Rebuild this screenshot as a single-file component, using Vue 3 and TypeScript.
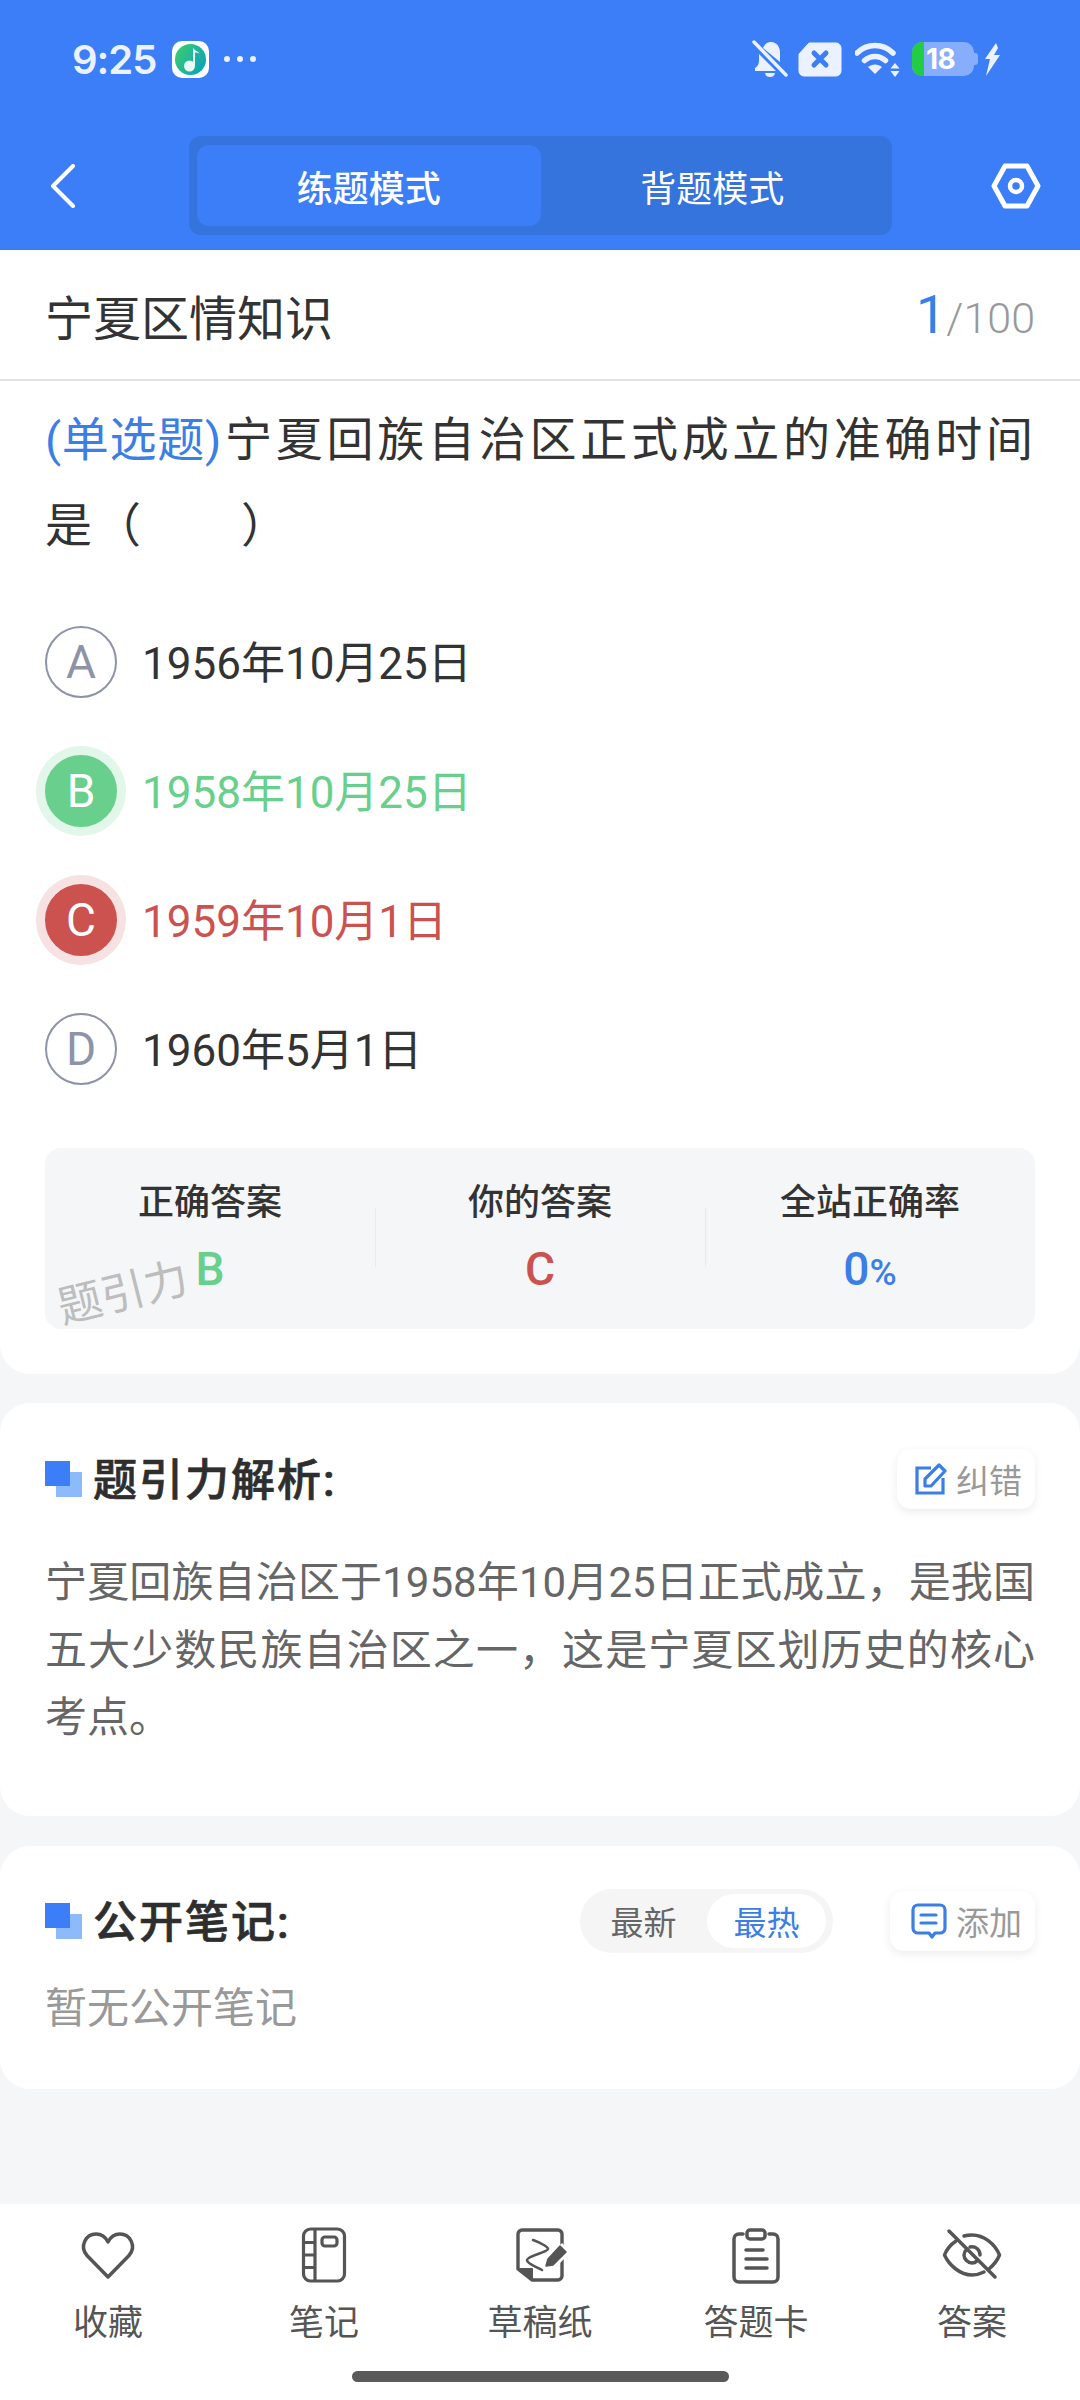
<script setup lang="ts">
interface Option {
  key: string
  text: string
  state: '' | 'right' | 'wrong'
}

interface Stat {
  label: string
  value: string
  unit?: string
  tone: string
}

const options: Option[] = [
  { key: 'A', text: '1956年10月25日', state: '' },
  { key: 'B', text: '1958年10月25日', state: 'right' },
  { key: 'C', text: '1959年10月1日', state: 'wrong' },
  { key: 'D', text: '1960年5月1日', state: '' }
]

const stats: Stat[] = [
  { label: '正确答案', value: 'B', tone: 'right' },
  { label: '你的答案', value: 'C', tone: 'wrong' },
  { label: '全站正确率', value: '0', unit: '%', tone: 'blue' }
]
</script>

<template>
  <div class="page">
    <header class="top">
      <div class="status">
        <div class="status-left">
          <span class="time">9:25</span>
          <span class="app-icon">
            <svg width="37" height="37" viewBox="0 0 37 37">
              <defs>
                <linearGradient id="musicGrad" x1="0" y1="0" x2="1" y2="0.6">
                  <stop offset="0" stop-color="#3fd06a" />
                  <stop offset="1" stop-color="#0ea5b5" />
                </linearGradient>
              </defs>
              <circle cx="18.5" cy="18.5" r="15.5" fill="url(#musicGrad)" />
              <circle cx="17.5" cy="25" r="5.5" fill="#eafaf5" />
              <path d="M21 25V6.500c.8 3 5 3.400 6.500 6-2.500-.9-4-1-4.500-.8V25z" fill="#eafaf5" />
            </svg>
          </span>
          <span class="dots"><i></i><i></i><i></i></span>
        </div>
        <div class="status-right">
          <svg width="38" height="38" viewBox="0 0 38 38" fill="#ebf1fe">
            <path d="M12 8c2-4 4-6 8-6 6 0 9 5 9 11v9zM8 14l17 17H4v-3c3-2 4-4 4-8zM14 33h10c-.6 3-2.500 4-5 4s-4.400-1-5-4z" />
            <path d="M3 2l32 33" stroke="#ebf1fe" stroke-width="3.500" stroke-linecap="round" />
          </svg>
          <svg width="44" height="35" viewBox="0 0 44 35">
            <path d="M11 1h27a5 5 0 0 1 5 5v23a5 5 0 0 1-5 5H6a5 5 0 0 1-5-5V12z" fill="#ebf1fe" stroke="#ebf1fe" stroke-linejoin="round" />
            <path d="M16 11l12 12M28 11L16 23" stroke="#3b7ef8" stroke-width="5" stroke-linecap="round" />
          </svg>
          <svg class="wifi" width="46" height="35" viewBox="0 0 46 35" fill="none">
            <path d="M2 11c10-10 26-10 36 0" stroke="#ebf1fe" stroke-width="5.500" stroke-linecap="round" />
            <path d="M9.500 18.500c6-5.500 15-5.500 21 0" stroke="#ebf1fe" stroke-width="5.500" stroke-linecap="round" />
            <path d="M13 25c4-3.500 10-3.500 14 0l-7 7z" fill="#ebf1fe" />
            <path d="M40 21l4.500 5.500h-9zM40 35l4.500-6h-9z" fill="#ebf1fe" />
          </svg>
          <div class="battery">
            <span class="battery-fill"></span>
            <span class="battery-num">18</span>
            <span class="battery-cap"></span>
          </div>
          <svg width="17" height="33" viewBox="0 0 17 33" fill="#ebf1fe">
            <path d="M12 0L1 16h5L2 33 16 12h-6l4-7z" />
          </svg>
        </div>
      </div>
      <div class="nav">
        <svg class="back" width="26" height="44" viewBox="0 0 26 44" fill="none">
          <path d="M23 2L3 22l20 20" stroke="#fff" stroke-width="4" stroke-linecap="round" stroke-linejoin="round" />
        </svg>
        <div class="tabs">
          <span class="tab active">练题模式</span>
          <span class="tab">背题模式</span>
        </div>
        <svg class="gear" width="50" height="46" viewBox="0 0 50 46" fill="none">
          <path d="M14 3h22l11 20-11 20H14L3 23z" stroke="#fff" stroke-width="5" stroke-linejoin="round" />
          <circle cx="25" cy="23" r="6" stroke="#fff" stroke-width="4.500" />
        </svg>
      </div>
    </header>

    <section class="card question">
      <div class="q-head">
        <span class="q-title">宁夏区情知识</span>
        <span class="q-count"><b>1</b>/100</span>
      </div>
      <p class="q-text"><span class="q-type">(单选题)</span>宁夏回族自治区正式成立的准确时间是（　　）</p>
      <ul class="options">
        <li v-for="opt in options" :key="opt.key" class="option" :class="opt.state">
          <span class="bullet">{{ opt.key }}</span>
          <span class="opt-text">{{ opt.text }}</span>
        </li>
      </ul>
      <div class="stats">
        <div v-for="s in stats" :key="s.label" class="stat">
          <span class="stat-label">{{ s.label }}</span>
          <span class="stat-value" :class="s.tone">{{ s.value }}<small v-if="s.unit">{{ s.unit }}</small></span>
        </div>
        <span class="watermark">题引力</span>
      </div>
    </section>

    <section class="card analysis">
      <div class="sec-head">
        <span class="squares"></span>
        <h2 class="sec-title">题引力解析:</h2>
        <button class="mini-btn" type="button">
          <svg width="32" height="32" viewBox="0 0 32 32" fill="none" stroke="#3b7ee6" stroke-width="3.200">
            <path d="M16 5H2v25h26V15" />
            <path d="M10 23v-7L24 2l6 6-14 15z" stroke-linejoin="round" />
          </svg>
          <span>纠错</span>
        </button>
      </div>
      <p class="analysis-text">宁夏回族自治区于1958年10月25日正式成立，是我国五大少数民族自治区之一，这是宁夏区划历史的核心考点。</p>
    </section>

    <section class="card notes">
      <div class="sec-head">
        <span class="squares"></span>
        <h2 class="sec-title">公开笔记:</h2>
        <div class="sorter">
          <span class="sort-item">最新</span>
          <span class="sort-item on">最热</span>
        </div>
        <button class="mini-btn add" type="button">
          <svg width="36" height="38" viewBox="0 0 36 38" fill="none" stroke="#3b7ee6" stroke-width="3.200" stroke-linecap="round" stroke-linejoin="round">
            <path d="M7 3h22a5 5 0 0 1 5 5v18a5 5 0 0 1-5 5h-5l-3 4-3-4H7a5 5 0 0 1-5-5V8a5 5 0 0 1 5-5z" />
            <path d="M10 13h15M10 21h15" />
          </svg>
          <span>添加</span>
        </button>
      </div>
      <p class="empty">暂无公开笔记</p>
    </section>

    <nav class="tabbar">
      <div class="tabbar-item">
        <svg width="60" height="60" viewBox="0 0 60 60" fill="none" stroke="#555" stroke-width="3.500" stroke-linejoin="round">
          <path d="M30 52L9 30.500C1 21 8 9 18 9c5 0 9.500 3 12 8 2.500-5 7-8 12-8 10 0 17 12 9 21.500z" />
        </svg>
        <span>收藏</span>
      </div>
      <div class="tabbar-item">
        <svg width="60" height="60" viewBox="0 0 60 60" fill="none" stroke="#555" stroke-width="3.200">
          <rect x="9.500" y="4" width="41" height="52" rx="7" />
          <path d="M21 4v52M9.500 17.500H21M9.500 30H21M9.500 42.500H21" />
          <rect x="28" y="12" width="15" height="9" rx="3" />
        </svg>
        <span>笔记</span>
      </div>
      <div class="tabbar-item">
        <svg width="60" height="60" viewBox="0 0 60 60" fill="none" stroke="#555" stroke-linejoin="round" stroke-linecap="round">
          <path d="M22 55H48c2 0 4-2 4-4V9c0-2-2-4-4-4H12c-2 0-4 2-4 4v35l14 11z" stroke-width="3.400" />
          <path d="M9 44h13v11z" fill="#555" stroke-width="2" />
          <path d="M23 15c5 2 15 6 15 9 0 3-21 7-21 11 0 4 10 7 15 10" stroke-width="2.600" />
          <path d="M33 43l3-9 16-16 9 9-16 16z" fill="#fff" stroke="none" />
          <path d="M36 41l2-7 12-13 6 6-13 13z" fill="#555" stroke="#555" stroke-width="1.500" />
        </svg>
        <span>草稿纸</span>
      </div>
      <div class="tabbar-item">
        <svg width="60" height="60" viewBox="0 0 60 60" fill="none" stroke="#555" stroke-width="3.500" stroke-linecap="round" stroke-linejoin="round">
          <path d="M17 9h-4c-3 0-5 2-5 5v38c0 3 2 5 5 5h34c3 0 5-2 5-5V14c0-3-2-5-5-5h-4" />
          <rect x="21" y="5" width="18" height="9" rx="3" />
          <path d="M20 25h17M20 34h21M20 43h21" />
        </svg>
        <span>答题卡</span>
      </div>
      <div class="tabbar-item">
        <svg width="60" height="60" viewBox="0 0 60 60" fill="none" stroke="#555" stroke-width="3.500" stroke-linecap="round" stroke-linejoin="round">
          <path d="M14 16C8 20 4 26 2.500 30 7 40 18 50 30 50c4 0 8-1 12-3M22 11c2.500-.7 5-1 8-1 12 0 23 9 27.500 20-2 5-6 10-10 13.500" />
          <path d="M25 24c-2 2-3 4-3 6 0 4 4 8 8 8 2 0 4-1 5-2M28 22c6-1 10 3 10 8" />
          <path d="M7 6l46 46" />
        </svg>
        <span>答案</span>
      </div>
    </nav>
    <div class="home-bar"><span></span></div>
  </div>
</template>

<style>
html,
body {
  margin: 0;
  background: #f4f6f8;
}
</style>

<style scoped>
.page {
  height: 2400px;
  display: flex;
  flex-direction: column;
  background: #f4f6f8;
  font-family: Roboto, 'Noto Sans CJK SC', sans-serif;
  color: #333;
  overflow: hidden;
}

.top {
  height: 250px;
  background: #3b7ef8;
  flex-shrink: 0;
  box-sizing: border-box;
  padding-top: 38px;
}

.status {
  height: 42px;
  display: flex;
  justify-content: space-between;
  align-items: center;
  padding: 0 79px 0 72px;
}

.status-left,
.status-right {
  display: flex;
  align-items: center;
}

.time {
  font-family: Inter, sans-serif;
  font-weight: 600;
  font-size: 40px;
  letter-spacing: -1px;
  color: #ebf1fe;
  width: 100px;
}

.app-icon {
  width: 37px;
  height: 37px;
  border-radius: 10px;
  background: #fff;
  display: block;
}

.app-icon svg {
  display: block;
}

.dots {
  display: flex;
  gap: 7px;
  margin-left: 15px;
}

.dots i {
  width: 6px;
  height: 6px;
  border-radius: 50%;
  background: #ebf1fe;
}

.status-right {
  gap: 9px;
}

.wifi {
  margin-left: 4px;
}

.battery {
  position: relative;
  width: 62px;
  height: 34px;
  border-radius: 10px;
  background: #86aefb;
  margin-left: 2px;
  margin-right: 1px;
}

.battery-fill {
  position: absolute;
  left: 0;
  top: 0;
  bottom: 0;
  width: 12px;
  background: #22cc44;
  border-radius: 10px 0 0 10px;
}

.battery-num {
  position: absolute;
  left: 14px;
  top: 0;
  line-height: 34px;
  font-family: Inter, sans-serif;
  font-size: 28px;
  font-weight: 700;
  letter-spacing: -0.5px;
  color: #fff;
}

.battery-cap {
  position: absolute;
  right: -4px;
  top: 11px;
  width: 4px;
  height: 12px;
  background: #86aefb;
  border-radius: 0 3px 3px 0;
}

.nav {
  height: 99px;
  margin-top: 56px;
  padding: 0 39px 0 50px;
  display: flex;
  align-items: center;
}

.nav svg {
  display: block;
}

.gear {
  margin-left: auto;
}

.tabs {
  width: 703px;
  height: 99px;
  box-sizing: border-box;
  padding: 9px 8px;
  border-radius: 12px;
  background: #3573dd;
  display: flex;
  margin-left: 113px;
}

.tab {
  flex: 1;
  display: flex;
  align-items: center;
  justify-content: center;
  border-radius: 12px;
  color: #fff;
  font-size: 36px;
  font-weight: 400;
}

.tab.active {
  background: #3b7ef8;
  font-weight: 500;
}

.card {
  background: #fff;
  flex-shrink: 0;
}

.question {
  height: 1124px;
  border-radius: 0 0 30px 30px;
  padding: 0 45px;
  box-sizing: border-box;
}

.q-head {
  height: 129px;
  margin: 0 -45px;
  padding: 0 45px;
  border-bottom: 2px solid #e2e2e2;
  display: flex;
  align-items: center;
  justify-content: space-between;
}

.q-title {
  font-size: 48px;
  color: #333;
}

.q-count {
  font-size: 43px;
  color: #999;
  font-weight: 300;
}

.q-count b {
  font-size: 54px;
  font-weight: 400;
  color: #3b7ee6;
}

.q-text {
  margin: 16px 0 0;
  font-size: 47px;
  line-height: 86px;
  letter-spacing: 2px;
  text-align: justify;
  color: #333;
}

.q-type {
  color: #3b7ee6;
  letter-spacing: -1px;
  margin-right: 3px;
}

.options {
  list-style: none;
  margin: 57px 0 0;
  padding: 0;
  display: flex;
  flex-direction: column;
  gap: 57px;
}

.option {
  height: 72px;
  display: flex;
  align-items: center;
  gap: 25px;
  font-size: 44px;
}

.opt-text {
  padding-bottom: 4px;
}

.bullet {
  width: 72px;
  height: 72px;
  box-sizing: border-box;
  border: 2px solid #8f93a8;
  border-radius: 50%;
  color: #8f93a8;
  font-size: 46px;
  display: flex;
  align-items: center;
  justify-content: center;
}

.option.right .bullet {
  background: #68d08c;
  border-color: #68d08c;
  color: #fff;
  box-shadow: 0 0 0 9px #e2f6ea;
}

.option.right .opt-text {
  color: #68d08c;
}

.option.wrong .bullet {
  background: #cc524f;
  border-color: #cc524f;
  color: #fff;
  box-shadow: 0 0 0 9px #f6e2e2;
}

.option.wrong .opt-text {
  color: #cc524f;
}

.stats {
  position: relative;
  height: 181px;
  margin-top: 63px;
  border-radius: 16px;
  background: #f4f6f8;
  display: grid;
  grid-template-columns: repeat(3, 1fr);
}

.stat {
  position: relative;
  display: flex;
  flex-direction: column;
  align-items: center;
  padding-top: 30px;
}

.stat + .stat::before {
  content: '';
  position: absolute;
  left: 0;
  top: 60px;
  height: 59px;
  width: 1px;
  background: #e8eaed;
}

.stat-label {
  font-size: 36px;
  line-height: 50px;
  font-weight: 500;
  color: #333;
}

.stat-value {
  margin-top: 16px;
  font-size: 46px;
  line-height: 50px;
  font-weight: 500;
}

.stat-value small {
  font-size: 37px;
}

.stat-value.right {
  color: #68d08c;
}

.stat-value.wrong {
  color: #cc524f;
}

.stat-value.blue {
  color: #3b7ee6;
}

.watermark {
  position: absolute;
  left: 12px;
  top: 120px;
  font-size: 44px;
  line-height: 50px;
  color: #bdbdbd;
  transform: rotate(-14deg);
}

.analysis {
  height: 413px;
  margin-top: 29px;
  border-radius: 30px;
  padding: 46px 45px 0;
  box-sizing: border-box;
}

.notes {
  height: 243px;
  margin-top: 30px;
  border-radius: 30px;
  padding: 45px 45px 0;
  box-sizing: border-box;
}

.sec-head {
  display: flex;
  align-items: center;
  height: 60px;
}

.squares {
  position: relative;
  width: 37px;
  height: 36px;
  flex-shrink: 0;
  background: linear-gradient(#8cbafa, #8cbafa) no-repeat 11px 11px / 26px 25px;
}

.squares::before {
  content: '';
  position: absolute;
  left: 0;
  top: 0;
  width: 25px;
  height: 25px;
  background: #3b7ef8;
}

.sec-title {
  margin: 0 0 4px 11px;
  font-size: 44px;
  font-weight: 500;
  -webkit-text-stroke: 0.7px #2e2e2e;
  color: #2e2e2e;
  letter-spacing: 2px;
  flex: 1;
}

.mini-btn {
  width: 138px;
  height: 60px;
  border: none;
  border-radius: 14px;
  background: #fff;
  box-shadow: 0 3px 10px rgba(0, 0, 0, 0.08);
  padding: 0 13px 0 0;
  display: flex;
  align-items: center;
  justify-content: flex-end;
  gap: 9px;
  font-family: inherit;
  font-size: 33px;
  color: #999;
}

.mini-btn.add {
  width: 145px;
  margin-left: 57px;
}

.mini-btn svg {
  flex-shrink: 0;
}

.analysis-text {
  margin: 40px 0 0;
  font-size: 42px;
  line-height: 67.500px;
  text-align: justify;
  color: #666;
}

.sorter {
  width: 253px;
  height: 64px;
  box-sizing: border-box;
  padding: 5px 7px 5px 0;
  border-radius: 32px;
  background: #f5f5f5;
  display: flex;
  justify-content: flex-end;
}

.sort-item {
  width: 127px;
  display: flex;
  align-items: center;
  justify-content: center;
  border-radius: 27px;
  font-size: 33px;
  color: #666;
}

.sort-item.on {
  width: 119px;
  background: #fff;
  color: #3b7ee6;
}

.empty {
  margin: 30px 0 0;
  font-size: 42px;
  line-height: 56px;
  color: #999;
}

.tabbar {
  margin-top: auto;
  height: 156px;
  background: #fff;
  display: grid;
  grid-template-columns: repeat(5, 216px);
  flex-shrink: 0;
}

.tabbar-item {
  display: flex;
  flex-direction: column;
  align-items: center;
  padding-top: 21px;
  font-size: 35px;
  color: #555;
}

.tabbar-item svg {
  display: block;
}

.tabbar-item span {
  line-height: 46px;
  margin-top: 16px;
}

.home-bar {
  height: 40px;
  background: #fff;
  flex-shrink: 0;
  display: flex;
  justify-content: center;
  padding-top: 11px;
  box-sizing: border-box;
}

.home-bar span {
  width: 377px;
  height: 11px;
  border-radius: 6px;
  background: #5a5a5a;
}
</style>
